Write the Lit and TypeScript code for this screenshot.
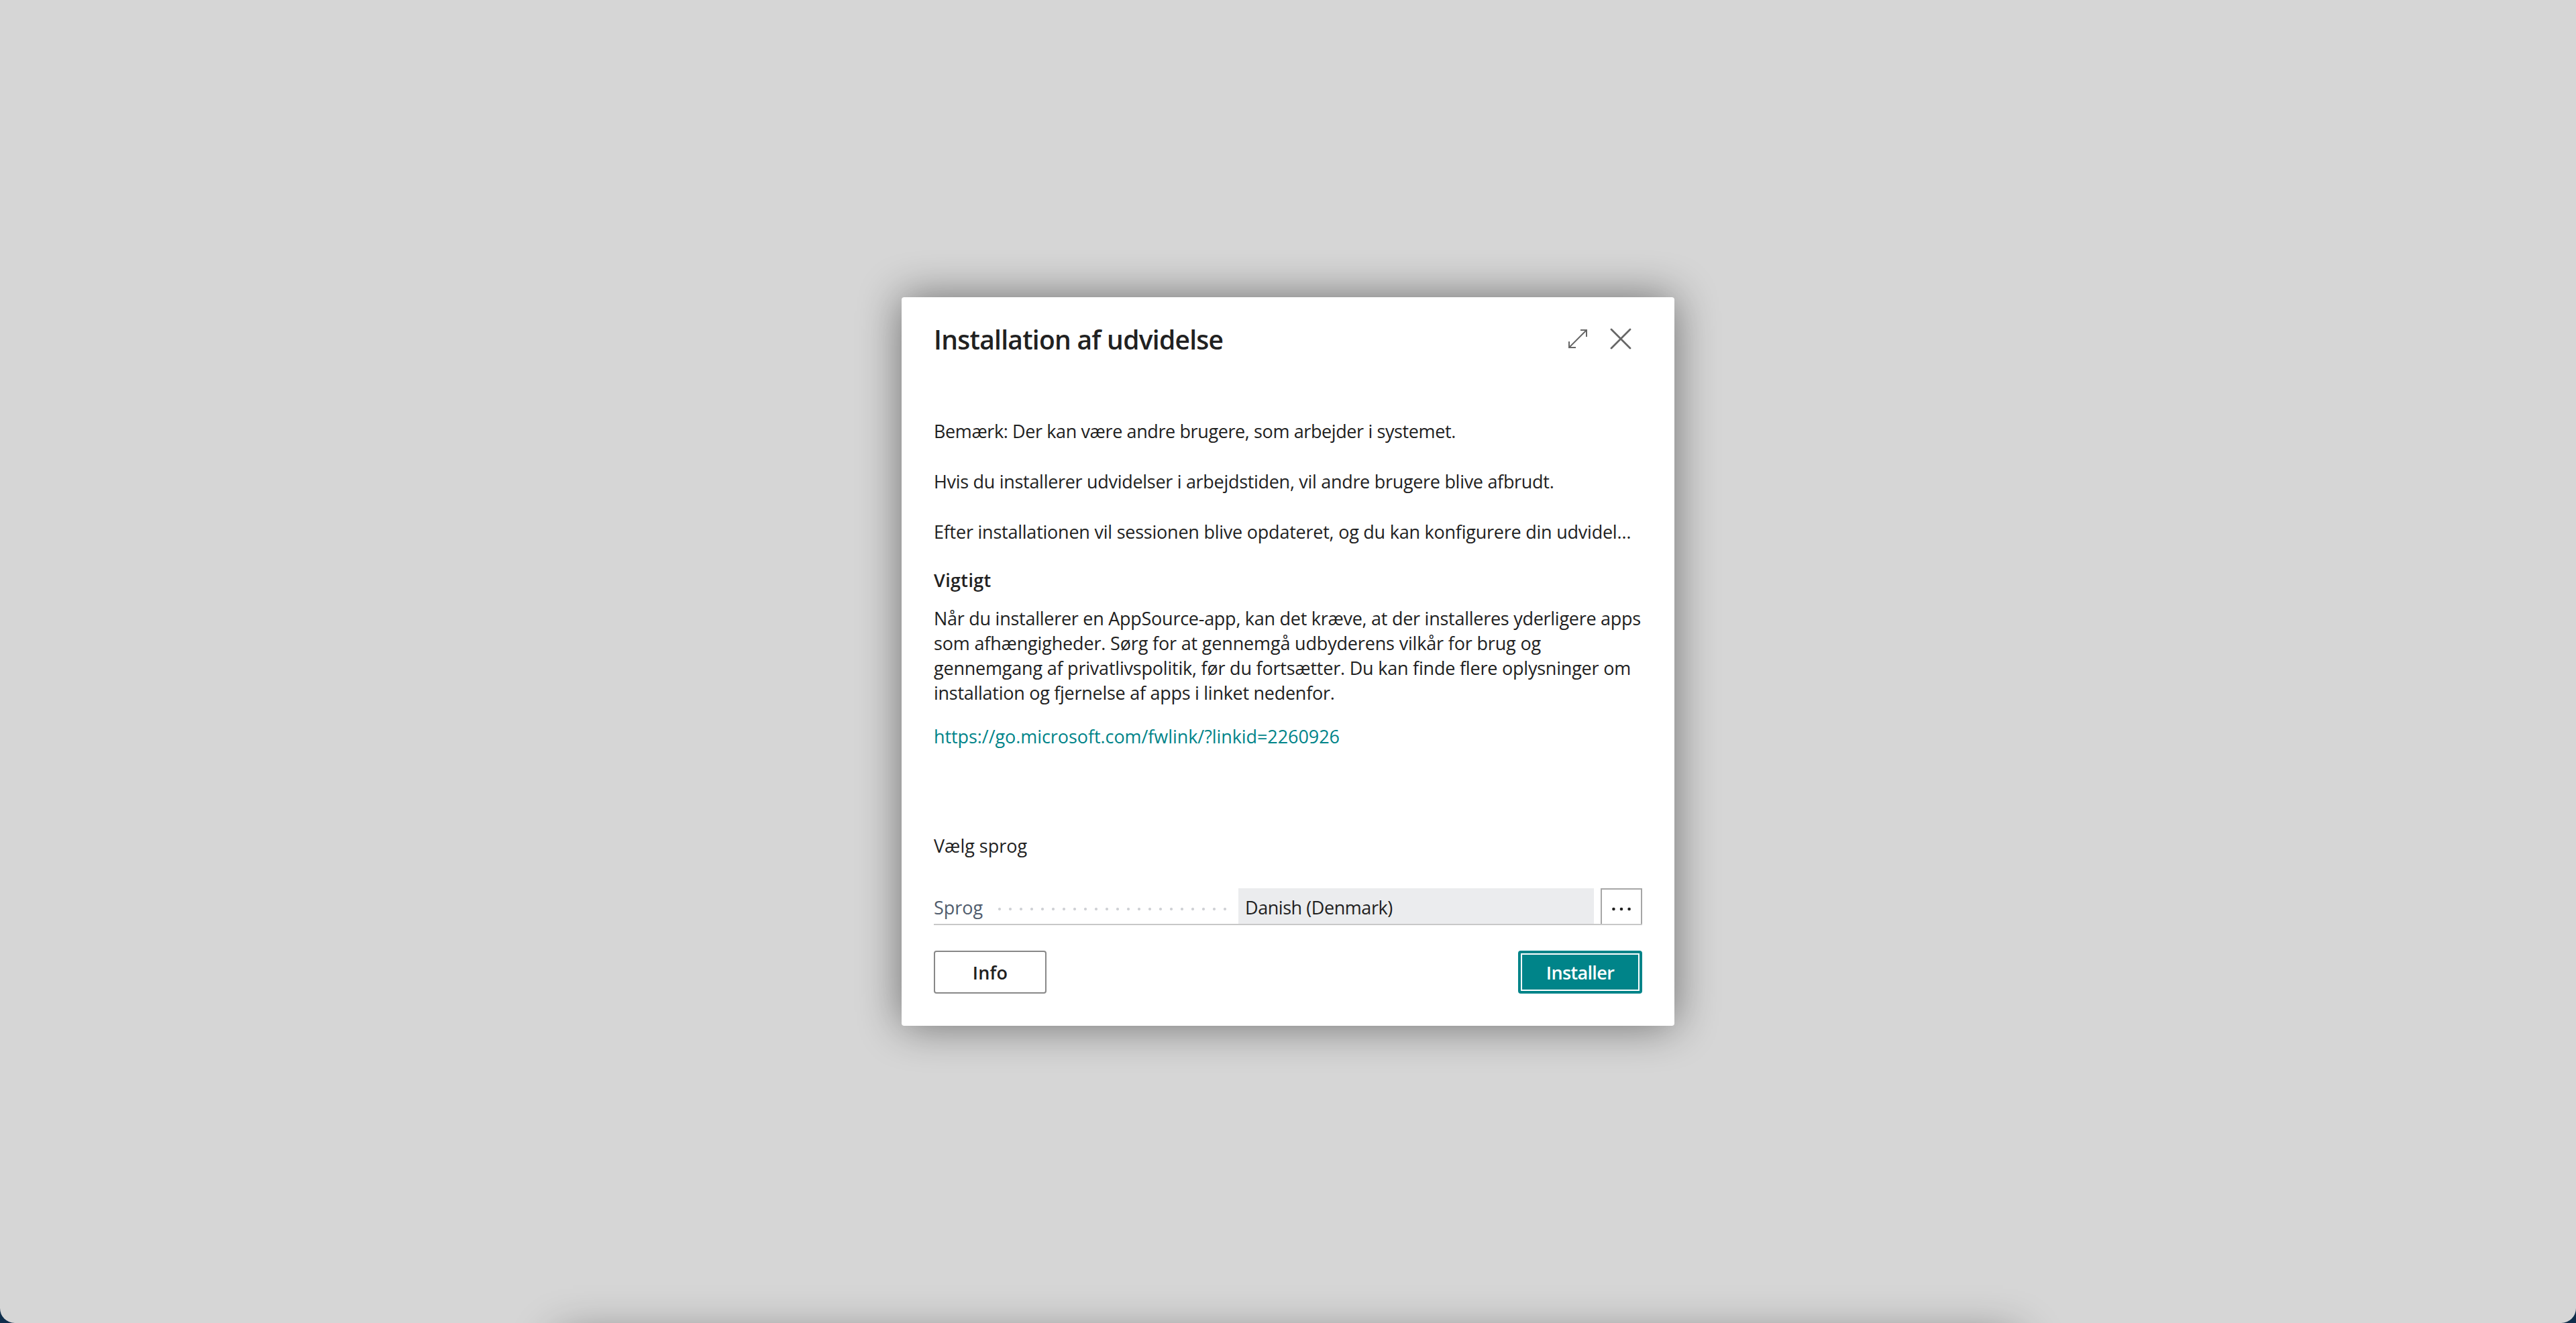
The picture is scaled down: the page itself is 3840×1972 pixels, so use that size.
import { LitElement, html, css } from 'lit';
import { customElement, property } from 'lit/decorators.js';

interface Line {
  text: string;
  // letter-spacing in px
  track: number;
}

const notes: Line[] = [
  { text: 'Bemærk: Der kan være andre brugere, som arbejder i systemet.', track: -0.391 },
  { text: 'Hvis du installerer udvidelser i arbejdstiden, vil andre brugere blive afbrudt.', track: -0.302 },
  { text: 'Efter installationen vil sessionen blive opdateret, og du kan konfigurere din udvidel…', track: -0.235 },
];

const important: Line[] = [
  { text: 'Når du installerer en AppSource-app, kan det kræve, at der installeres yderligere apps', track: -0.266 },
  { text: 'som afhængigheder. Sørg for at gennemgå udbyderens vilkår for brug og', track: -0.169 },
  { text: 'gennemgang af privatlivspolitik, før du fortsætter. Du kan finde flere oplysninger om', track: -0.213 },
  { text: 'installation og fjernelse af apps i linket nedenfor.', track: -0.275 },
];

@customElement('bc-line')
export class BcLine extends LitElement {
  static styles = css`
    :host {
      display: block;
      white-space: nowrap;
    }
  `;

  @property({ attribute: false }) line!: Line;

  render() {
    return html`<span style="letter-spacing: ${this.line.track}px">${this.line.text}</span>`;
  }
}

@customElement('bc-language-field')
export class BcLanguageField extends LitElement {
  static styles = css`
    :host {
      display: flex;
      height: 53px;
      border-bottom: 2px solid #c8c8c8;
      overflow: hidden;
    }
    .caption {
      display: flex;
      width: 454px;
      color: #505c6d;
    }
    .label {
      padding-top: 10px;
      width: 90px;
    }
    .dots {
      height: 62px;
      width: 352px;
      background: radial-gradient(circle at 8px 31px, #d0d2d6 1.7px, transparent 2.4px) 0 0 / 16px 62px repeat-x;
    }
    .value {
      flex: 1;
      padding: 10px 0 0 10px;
      background: #ebecee;
      letter-spacing: -0.446px;
    }
    .assist {
      display: flex;
      justify-content: center;
      width: 62px;
      height: 64px;
      margin-left: 10px;
      box-sizing: border-box;
      border: 2px solid #a6a6a6;
    }
    svg {
      margin-top: 26px;
    }
  `;

  render() {
    return html`
      <div class="caption">
        <span class="label">Sprog</span>
        <span class="dots"></span>
      </div>
      <div class="value">Danish (Denmark)</div>
      <div class="assist">
        <svg width="30" height="6" viewBox="0 0 30 6" fill="#212121">
          <circle cx="3.4" cy="3" r="2.3" />
          <circle cx="15" cy="3" r="2.3" />
          <circle cx="26.6" cy="3" r="2.3" />
        </svg>
      </div>
    `;
  }
}

@customElement('app-root')
export class AppRoot extends LitElement {
  static styles = css`
    :host {
      display: block;
      height: 1972px;
      background: #0f2e4c;
      font: 27px/37px 'Open Sans', sans-serif;
      color: #212121;
    }
    .page {
      position: relative;
      display: flex;
      align-items: center;
      justify-content: center;
      height: 100%;
      overflow: hidden;
      border-radius: 0 0 22px 22px;
      background: #d6d6d6;
    }
    /* dialog parked below the viewport, only its shadow is visible */
    .parked {
      position: absolute;
      top: 100%;
      left: 832px;
      right: 832px;
      height: 400px;
      margin-top: 22px;
      box-shadow: 0 0 64px rgba(0, 0, 0, 0.47);
    }
    .dialog {
      position: relative;
      width: 1152px;
      box-sizing: border-box;
      padding: 34px 48px 48px;
      border-radius: 4px;
      background: #fff;
      box-shadow: 0 0 64px rgba(0, 0, 0, 0.49);
    }
    header {
      display: flex;
      align-items: center;
      height: 56px;
      margin-bottom: 91px;
      padding-right: 16px;
    }
    h1 {
      flex: 1;
      margin: 0;
      font-size: 39px;
      line-height: 57px;
      font-weight: 600;
      letter-spacing: -0.74px;
    }
    .expand {
      margin-right: 34px;
    }
    .notes {
      display: flex;
      flex-direction: column;
      gap: 38px;
    }
    h2 {
      margin: 35px 0 20px;
      font-size: 27px;
      line-height: 37px;
      font-weight: 600;
      letter-spacing: 0.35px;
    }
    .link {
      display: block;
      margin-top: 28px;
      color: #008489;
      text-decoration: none;
      letter-spacing: -0.07px;
    }
    .choose {
      margin: 126px 0 45px;
    }
    footer {
      display: flex;
      justify-content: space-between;
      margin-top: 38px;
    }
    button {
      height: 64px;
      margin: 0;
      padding: 0;
      border-radius: 4px;
      font: 600 27px/37px 'Open Sans', sans-serif;
    }
    .info {
      width: 168px;
      border: 2px solid #888;
      background: #fff;
      color: #212121;
      letter-spacing: 0.2px;
    }
    .install {
      width: 185px;
      border: 0;
      background: #008489;
      color: #fff;
      letter-spacing: -0.64px;
      outline: 2px solid #fff;
      outline-offset: -6px;
    }
  `;

  render() {
    return html`
      <div class="page">
        <div class="parked"></div>
        <div class="dialog">
          <header>
            <h1>Installation af udvidelse</h1>
            <svg class="expand" width="28" height="28" viewBox="0 0 28 28" fill="none" stroke="#666" stroke-width="2">
              <path d="M18 1h9v10M1 18v9h10M27 1L1 27" />
            </svg>
            <svg width="32" height="32" viewBox="0 0 32 32" fill="none" stroke="#666" stroke-width="2.8" stroke-linecap="round">
              <path d="M2 2l28 28M30 2L2 30" />
            </svg>
          </header>
          <div class="notes">${notes.map((line) => html`<bc-line .line=${line}></bc-line>`)}</div>
          <h2>Vigtigt</h2>
          <div>${important.map((line) => html`<bc-line .line=${line}></bc-line>`)}</div>
          <a class="link" href="https://go.microsoft.com/fwlink/?linkid=2260926">https://go.microsoft.com/fwlink/?linkid=2260926</a>
          <div class="choose">Vælg sprog</div>
          <bc-language-field></bc-language-field>
          <footer>
            <button class="info">Info</button>
            <button class="install">Installer</button>
          </footer>
        </div>
      </div>
    `;
  }
}
